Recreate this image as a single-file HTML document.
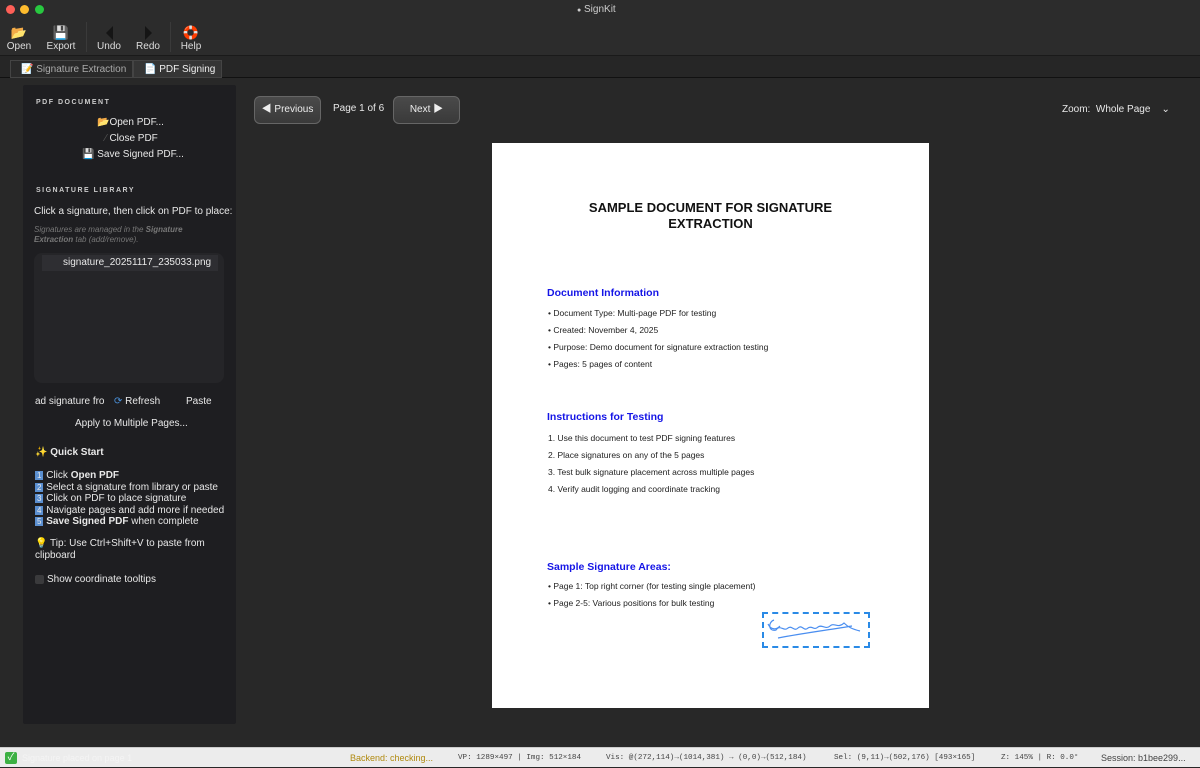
<!DOCTYPE html>
<html><head><meta charset="utf-8"><style>
*{box-sizing:border-box;margin:0;padding:0}
body{width:1200px;height:767px;background:#282828;font-family:"Liberation Sans","Noto Sans CJK SC",sans-serif;color:#e8e8e8;font-size:10px;position:relative;overflow:hidden}
.abs{position:absolute}
.title{left:0;top:0;width:1200px;height:56px;background:#2c2c2c;border-bottom:1px solid #1a1a1a}
.dot{width:9px;height:9px;border-radius:50%;top:5px}
.tb{top:24px;text-align:center;font-size:10px;color:#ddd}
.tb .ic{font-size:13px;height:17px;line-height:17px}
.sep{top:22px;width:1px;height:30px;background:#3a3a3a}
.tabs{left:0;top:56px;width:1200px;height:22px;background:#262626;border-bottom:1px solid #111}
.tab{top:60px;height:18px;font-size:10px;line-height:18px;padding-left:10px;border:1px solid #444;background:#333}
.left{left:23px;top:85px;width:213px;height:639px;background:#1e1e21;border-radius:2px}
.hdr{font-size:7px;font-weight:bold;letter-spacing:1.5px;color:#ccc}
.btn{border:1px solid #666;background:linear-gradient(#4a4a4a,#3a3a3a);border-radius:6px;color:#eee;font-size:10px;text-align:center;line-height:26px;height:28px}
.page{left:492px;top:143px;width:437px;height:565px;background:#fff;color:#111}
.page .h{color:#1515e6;font-weight:bold;font-size:10.5px;position:absolute;left:55px}
.page .t{font-size:8.5px;position:absolute;left:56px;color:#222}
.status{left:0;top:747px;width:1200px;height:20px;background:#ececec;border-top:1px solid #ccc;font-size:9px;line-height:20px;color:#444}
.mono{font-family:"Liberation Mono",monospace;font-size:7.6px}
.tri{display:inline-block;width:0;height:0;border-top:7px solid transparent;border-bottom:7px solid transparent;margin-top:2px}
</style></head><body>
<div class="abs title"></div>
<div class="abs dot" style="left:6px;background:#fe5f57"></div>
<div class="abs dot" style="left:20px;background:#febc2e"></div>
<div class="abs dot" style="left:35px;background:#28c840"></div>
<div class="abs" style="left:577px;top:4px;font-size:10px;color:#ccc"><span style="font-size:7px">●</span> SignKit</div>
<div class="abs tb" style="left:6px;width:26px"><div class="ic">📂</div>Open</div>
<div class="abs tb" style="left:44px;width:34px"><div class="ic">💾</div>Export</div>
<div class="abs sep" style="left:86px"></div>
<div class="abs tb" style="left:96px;width:26px"><div class="ic"><span class="tri" style="border-right:7px solid #151515"></span></div>Undo</div>
<div class="abs tb" style="left:135px;width:26px"><div class="ic"><span class="tri" style="border-left:7px solid #151515"></span></div>Redo</div>
<div class="abs sep" style="left:170px"></div>
<div class="abs tb" style="left:178px;width:26px"><div class="ic">🛟</div>Help</div>
<div class="abs tabs"></div>
<div class="abs tab" style="left:10px;width:123px;color:#aaa;background:#2a2a2a">📝 Signature Extraction</div>
<div class="abs tab" style="left:133px;width:89px;color:#eee;background:#353535">📄 PDF Signing</div>
<div class="abs left">
 <div class="abs hdr" style="left:13px;top:14px">PDF DOCUMENT</div>
 <div class="abs" style="left:74px;top:32px;font-size:10px">📂Open PDF...</div>
 <div class="abs" style="left:82px;top:48px;font-size:10px"><span style="color:#555">⁄</span> Close PDF</div>
 <div class="abs" style="left:59px;top:64px;font-size:10px">💾 Save Signed PDF...</div>
 <div class="abs hdr" style="left:13px;top:102px">SIGNATURE LIBRARY</div>
 <div class="abs" style="left:11px;top:121px;font-size:10px">Click a signature, then click on PDF to place:</div>
 <div class="abs" style="left:11px;top:140px;font-size:8px;color:#777;font-style:italic;line-height:10px">Signatures are managed in the <b>Signature<br>Extraction</b> tab (add/remove).</div>
 <div class="abs" style="left:11px;top:168px;width:190px;height:130px;background:#252528;border-radius:8px"></div>
 <div class="abs" style="left:19px;top:170px;width:176px;height:16px;background:#2e2e32;font-size:10px;line-height:16px;padding-left:21px">signature_20251117_235033.png</div>
 <div class="abs" style="left:12px;top:311px;font-size:10px;width:70px;overflow:hidden;white-space:nowrap">ad signature from</div>
 <div class="abs" style="left:91px;top:311px;font-size:10px"><span style="color:#4a90d9">⟳</span> Refresh</div>
 <div class="abs" style="left:163px;top:311px;font-size:10px">Paste</div>
 <div class="abs" style="left:52px;top:333px;font-size:10px">Apply to Multiple Pages...</div>
 <div class="abs" style="left:12px;top:362px;font-size:10px;font-weight:bold"><span style="color:#f5d442">✨</span> Quick Start</div>
 <div class="abs" style="left:12px;top:385px;font-size:10px;line-height:11.5px">
 <div><span style="background:#5b8fd0;font-size:8px;padding:0 2px">1</span> Click <b>Open PDF</b></div>
 <div><span style="background:#5b8fd0;font-size:8px;padding:0 2px">2</span> Select a signature from library or paste</div>
 <div><span style="background:#5b8fd0;font-size:8px;padding:0 2px">3</span> Click on PDF to place signature</div>
 <div><span style="background:#5b8fd0;font-size:8px;padding:0 2px">4</span> Navigate pages and add more if needed</div>
 <div><span style="background:#5b8fd0;font-size:8px;padding:0 2px">5</span> <b>Save Signed PDF</b> when complete</div></div>
 <div class="abs" style="left:12px;top:453px;font-size:10px;line-height:11.5px"><span style="color:#f5d442">💡</span> Tip: Use Ctrl+Shift+V to paste from<br>clipboard</div>
 <div class="abs" style="left:12px;top:490px;width:9px;height:9px;background:#3a3a3c;border-radius:2px"></div>
 <div class="abs" style="left:24px;top:489px;font-size:10px">Show coordinate tooltips</div>
</div>
<div class="abs btn" style="left:254px;top:96px;width:67px">◀ Previous</div>
<div class="abs" style="left:333px;top:103px;font-size:10px">Page 1 of 6</div>
<div class="abs btn" style="left:393px;top:96px;width:67px">Next ▶</div>
<div class="abs" style="left:1062px;top:104px;font-size:10px">Zoom:&nbsp; Whole Page &nbsp;&nbsp;&nbsp;⌄</div>
<div class="abs page">
 <div class="abs" style="left:0;width:437px;top:57px;text-align:center;font-weight:bold;font-size:13px;line-height:16px">SAMPLE DOCUMENT FOR SIGNATURE<br>EXTRACTION</div>
 <div class="h" style="top:144px">Document Information</div>
 <div class="t" style="top:165px">• Document Type: Multi-page PDF for testing</div>
 <div class="t" style="top:182px">• Created: November 4, 2025</div>
 <div class="t" style="top:199px">• Purpose: Demo document for signature extraction testing</div>
 <div class="t" style="top:216px">• Pages: 5 pages of content</div>
 <div class="h" style="top:268px">Instructions for Testing</div>
 <div class="t" style="top:290px">1. Use this document to test PDF signing features</div>
 <div class="t" style="top:307px">2. Place signatures on any of the 5 pages</div>
 <div class="t" style="top:324px">3. Test bulk signature placement across multiple pages</div>
 <div class="t" style="top:341px">4. Verify audit logging and coordinate tracking</div>
 <div class="h" style="top:418px">Sample Signature Areas:</div>
 <div class="t" style="top:438px">• Page 1: Top right corner (for testing single placement)</div>
 <div class="t" style="top:455px">• Page 2-5: Various positions for bulk testing</div>
 <div class="abs" style="left:270px;top:469px;width:108px;height:36px;border:2px dashed #2a8ae6"></div>
 <svg class="abs" style="left:272px;top:471px" width="104" height="32"><path d="M10 6c-6 2-6 12 2 10 4-6 8 2 12-2 4-3 6 4 10 0 4-4 6 4 10 0 4-3 6 3 10-1 4-3 8 3 12-1 4-4 8 3 14-3 4 4 8 6 16 8M14 24c20-4 50-8 74-12M4 10c3 6 8 6 12 2" fill="none" stroke="#4a8ef0" stroke-width="1.2"/></svg>
</div>
<div class="abs status">
 <span class="abs" style="left:5px;top:4px;width:12px;height:12px;background:#3cb043;border-radius:2px;color:#fff;font-size:10px;line-height:12px;text-align:center">✓</span>
 <span class="abs" style="left:22px;color:#f4f4f4">Signature placed on page 1</span>
 <span class="abs" style="left:350px;color:#b08a10">Backend: checking...</span>
 <span class="abs mono" style="left:458px">VP: 1289×497 | Img: 512×184</span>
 <span class="abs mono" style="left:606px">Vis: @(272,114)→(1014,381) → (0,0)→(512,184)</span>
 <span class="abs mono" style="left:834px">Sel: (9,11)→(502,176) [493×165]</span>
 <span class="abs mono" style="left:1001px">Z: 145% | R: 0.0°</span>
 <span class="abs" style="left:1101px">Session: b1bee299...</span>
</div>
</body></html>
